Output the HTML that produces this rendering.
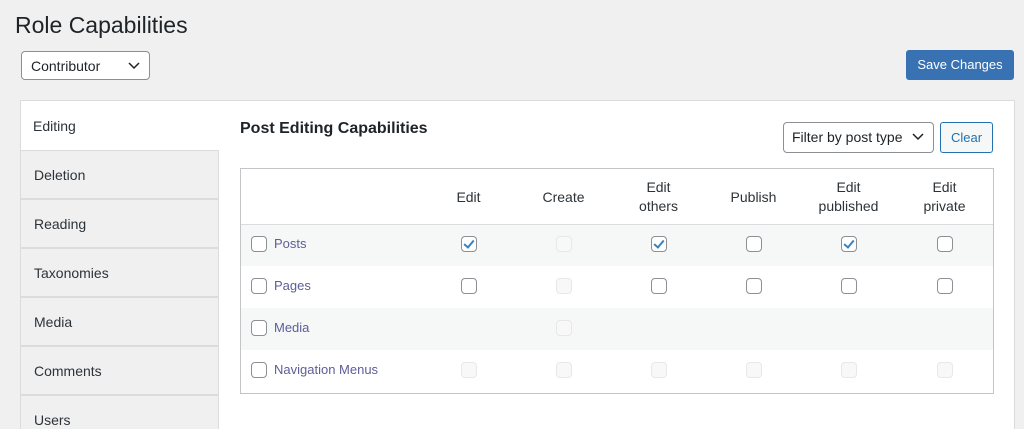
<!DOCTYPE html>
<html style="overflow:hidden;height:429px"><head><style>
html,body{overflow:hidden}
body{margin:0;width:1024px;height:429px;background:#f0f0f1;font-family:"Liberation Sans",sans-serif;color:#1d2327;position:relative}
.a{position:absolute}
h1{position:absolute;left:15px;top:12px;margin:0;font-size:23px;font-weight:400}
.sel{position:absolute;background:#fff;border:1px solid #8c8f94;border-radius:4px;font-size:14px;box-sizing:border-box;padding-left:9px;line-height:28px}
.sel svg{position:absolute;right:9px;top:10px}
.panel{left:20px;top:100px;width:995px;height:329px;background:#fff;border:1px solid #dcdcde;border-bottom:none;box-sizing:border-box}
.tab{position:absolute;left:20px;width:199px;height:49px;background:#f0f0f1;border:1px solid #dcdcde;box-sizing:border-box;font-size:14px;padding:16px 0 0 13px;color:#2c3338}
.cb{position:absolute;width:14px;height:14px;border:1px solid #8c8f94;border-radius:4px;background:#fff}
.cb.d{border-color:#e8e8ea;background:#f8f8f8}
.cb.c::after{content:"";position:absolute;left:4px;top:1px;width:4px;height:8px;border:solid #3582c4;border-width:0 2px 2px 0;transform:rotate(40deg)}
.th{position:absolute;font-size:14px;text-align:center;width:95px;line-height:19px;color:#2c3338}
.lbl{position:absolute;left:274px;font-size:13px;color:#5c5e98}
</style></head><body>
<h1>Role Capabilities</h1>
<div class="sel" style="left:21px;top:51px;width:129px;height:29px">Contributor<svg width="12" height="8"><path d="M1 1l5 5 5-5" stroke="#1d2327" stroke-width="1.5" fill="none"/></svg></div>
<div class="a" style="left:906px;top:50px;width:108px;height:30px;background:#3872b2;border-radius:3px;color:#fff;font-size:13px;text-align:center;line-height:30px">Save Changes</div>
<div class="a panel"></div>
<div class="a" style="left:33px;top:118px;font-size:14px;color:#2c3338">Editing</div>
<div class="tab" style="top:150px">Deletion</div>
<div class="tab" style="top:199px">Reading</div>
<div class="tab" style="top:248px">Taxonomies</div>
<div class="tab" style="top:297px">Media</div>
<div class="tab" style="top:346px">Comments</div>
<div class="tab" style="top:395px">Users</div>
<div class="a" style="left:240px;top:120px;font-size:16px;font-weight:700">Post Editing Capabilities</div>
<div class="sel" style="left:783px;top:122px;width:151px;height:31px;line-height:29px;padding-left:8px">Filter by post type<svg width="12" height="8"><path d="M1 1l5 5 5-5" stroke="#1d2327" stroke-width="1.5" fill="none"/></svg></div>
<div class="a" style="left:940px;top:122px;width:53px;height:31px;border:1px solid #2271b1;border-radius:3px;box-sizing:border-box;background:#f6f7f7;color:#2271b1;font-size:13px;text-align:center;line-height:29px">Clear</div>
<div class="a" style="left:240px;top:168px;width:754px;height:226px;border:1px solid #c3c4c7;box-sizing:border-box"></div>
<div class="a" style="left:241px;top:224px;width:752px;height:1px;background:#dcdcde"></div>
<div class="a" style="left:241px;top:225px;width:752px;height:41px;background:#f6f7f7"></div>
<div class="a" style="left:241px;top:308px;width:752px;height:42px;background:#f6f7f7"></div>
<div class="th" style="left:421px;top:188px">Edit</div>
<div class="th" style="left:516px;top:188px">Create</div>
<div class="th" style="left:611px;top:178px">Edit<br>others</div>
<div class="th" style="left:706px;top:188px">Publish</div>
<div class="th" style="left:801px;top:178px">Edit<br>published</div>
<div class="th" style="left:897px;top:178px">Edit<br>private</div>
<div class="cb" style="left:251px;top:236px"></div><div class="lbl" style="top:236px">Posts</div>
<div class="cb" style="left:251px;top:278px"></div><div class="lbl" style="top:278px">Pages</div>
<div class="cb" style="left:251px;top:320px"></div><div class="lbl" style="top:320px">Media</div>
<div class="cb" style="left:251px;top:362px"></div><div class="lbl" style="top:362px">Navigation Menus</div>
<div class="cb c" style="left:461px;top:236px"></div><div class="cb d" style="left:556px;top:236px"></div><div class="cb c" style="left:651px;top:236px"></div><div class="cb" style="left:746px;top:236px"></div><div class="cb c" style="left:841px;top:236px"></div><div class="cb" style="left:937px;top:236px"></div>
<div class="cb" style="left:461px;top:278px"></div><div class="cb d" style="left:556px;top:278px"></div><div class="cb" style="left:651px;top:278px"></div><div class="cb" style="left:746px;top:278px"></div><div class="cb" style="left:841px;top:278px"></div><div class="cb" style="left:937px;top:278px"></div>
<div class="cb d" style="left:556px;top:320px"></div>
<div class="cb d" style="left:461px;top:362px"></div><div class="cb d" style="left:556px;top:362px"></div><div class="cb d" style="left:651px;top:362px"></div><div class="cb d" style="left:746px;top:362px"></div><div class="cb d" style="left:841px;top:362px"></div><div class="cb d" style="left:937px;top:362px"></div>
</body></html>
